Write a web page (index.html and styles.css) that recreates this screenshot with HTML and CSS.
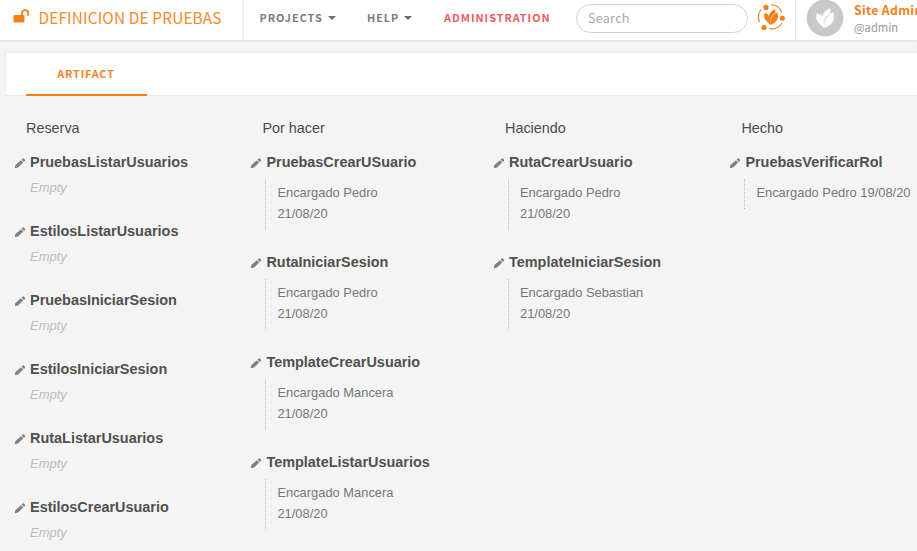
FILE: index.html
```html
<!DOCTYPE html>
<html lang="es">
<head>
<meta charset="utf-8">
<title>Definicion de pruebas</title>
<link rel="stylesheet" href="styles.css">
</head>
<body>
<svg class="defs" width="0" height="0" aria-hidden="true">
  <symbol id="pencil" viewBox="0 0 12 12">
    <path fill="#808080" d="M.8 11.2 1.4 8 7 3.2 9.2 5.6 4 10.6Z"/>
    <path fill="#808080" d="M7.6 2.6 8.8 1.6Q9.5 1 10.2 1.7L11 2.7Q11.5 3.3 10.9 3.9L9.8 5Z"/>
  </symbol>
  <symbol id="tulip" viewBox="0 0 24 24">
    <path d="M10.5 23C9 19 2 17 2.500 10Q2.500 8 3.500 7C8 8 10.500 11 10.500 17Q11.500 20 10.500 23Z"/>
    <path d="M11 16C7 10 11 4 17.500 1.500C18 4 18 5 17.500 7C14 9 12 11 11 16Z"/>
    <path d="M11.500 22.500C11 14 14.500 9 21 6C23 14 20 20 11.500 22.500Z"/>
  </symbol>
</svg>
<header class="topbar">
  <a class="project">
    <svg class="lock" width="17" height="14" viewBox="0 0 17 14"><rect x=".5" y="6" width="11" height="7.500" rx="1" fill="#f57f17"/><path d="M9 6.500V4.200a3.100 3.100 0 0 1 6.200 0V6" fill="none" stroke="#f57f17" stroke-width="1.800" stroke-linecap="round"/></svg>
    <span class="project-name">DEFINICION DE PRUEBAS</span>
  </a>
  <nav class="menu">
    <a class="projects">PROJECTS<i class="caret"></i></a>
    <a class="help">HELP<i class="caret"></i></a>
    <a class="administration">ADMINISTRATION</a>
  </nav>
  <div class="search">Search</div>
  <svg class="logo" width="28" height="28" viewBox="0 0 28 28">
    <g fill="none" stroke="#f57f17" stroke-width="1.1"><path d="M14 1.8A12.2 12.2 0 0 1 25 9.5M25 20A12.2 12.2 0 0 1 12.5 25.6M2.5 19.2A12.2 12.2 0 0 1 4 6.5"/></g>
    <g fill="#f57f17"><circle cx="9" cy="4.4" r="2.6"/><circle cx="25.4" cy="15.3" r="2.5"/><circle cx="7" cy="24.6" r="2.6"/></g>
    <use href="#tulip" x="5.500" y="5.500" width="17" height="17" fill="#f57f17" stroke="#f57f17" stroke-width=".6"/>
  </svg>
  <div class="user">
    <svg class="avatar" width="38" height="38" viewBox="0 0 38 38"><circle cx="19" cy="19" r="18.4" fill="#c9c9c9"/><circle cx="19" cy="19" r="16.5" fill="none" stroke="#c1c1c1" stroke-width=".7"/><use href="#tulip" x="8" y="8" width="22" height="22" fill="#fff" stroke="#fff" stroke-width=".4"/></svg>
    <div class="user-text"><b>Site Admin</b><span>@admin</span></div>
  </div>
</header>
<div class="tabs"><a class="tab">ARTIFACT</a></div>
<main class="board">
  <section class="column">
    <h2>Reserva</h2>
    <article><h3><svg class="pencil"><use href="#pencil"/></svg>PruebasListarUsuarios</h3><p class="empty">Empty</p></article>
    <article><h3><svg class="pencil"><use href="#pencil"/></svg>EstilosListarUsuarios</h3><p class="empty">Empty</p></article>
    <article><h3><svg class="pencil"><use href="#pencil"/></svg>PruebasIniciarSesion</h3><p class="empty">Empty</p></article>
    <article><h3><svg class="pencil"><use href="#pencil"/></svg>EstilosIniciarSesion</h3><p class="empty">Empty</p></article>
    <article><h3><svg class="pencil"><use href="#pencil"/></svg>RutaListarUsuarios</h3><p class="empty">Empty</p></article>
    <article><h3><svg class="pencil"><use href="#pencil"/></svg>EstilosCrearUsuario</h3><p class="empty">Empty</p></article>
  </section>
  <section class="column">
    <h2>Por hacer</h2>
    <article><h3><svg class="pencil"><use href="#pencil"/></svg>PruebasCrearUSuario</h3><p class="note">Encargado Pedro<br>21/08/20</p></article>
    <article><h3><svg class="pencil"><use href="#pencil"/></svg>RutaIniciarSesion</h3><p class="note">Encargado Pedro<br>21/08/20</p></article>
    <article><h3><svg class="pencil"><use href="#pencil"/></svg>TemplateCrearUsuario</h3><p class="note">Encargado Mancera<br>21/08/20</p></article>
    <article><h3><svg class="pencil"><use href="#pencil"/></svg>TemplateListarUsuarios</h3><p class="note">Encargado Mancera<br>21/08/20</p></article>
  </section>
  <section class="column">
    <h2>Haciendo</h2>
    <article><h3><svg class="pencil"><use href="#pencil"/></svg>RutaCrearUsuario</h3><p class="note">Encargado Pedro<br>21/08/20</p></article>
    <article><h3><svg class="pencil"><use href="#pencil"/></svg>TemplateIniciarSesion</h3><p class="note">Encargado Sebastian<br>21/08/20</p></article>
  </section>
  <section class="column">
    <h2>Hecho</h2>
    <article><h3><svg class="pencil"><use href="#pencil"/></svg>PruebasVerificarRol</h3><p class="note">Encargado Pedro 19/08/20</p></article>
  </section>
</main>
</body>
</html>
```
FILE: styles.css
```css
* { box-sizing: border-box; }
body {
  margin: 0;
  height: 551px;
  overflow: hidden;
  background: #f4f4f4;
  font-family: "Liberation Sans", sans-serif;
}
.defs { display: none; }
h2, h3, p { margin: 0; }

.topbar {
  display: flex;
  height: 40px;
  background: #fff;
  box-shadow: 0 1px 2px #dddddf;
  font-family: "Noto Sans CJK SC", sans-serif;
  white-space: nowrap;
}
.project {
  display: flex;
  flex: none;
  width: 244px;
  padding: 0 0 0 13px;
  border-right: 2px solid #f0f0f5;
  color: #f68a2a;
}
.lock { margin: 9px 8.5px 0 0; flex: none; }
.project-name { font-size: 15.4px; line-height: 34px; letter-spacing: .15px; }
.menu {
  display: flex;
  flex: none;
  width: 332px;
  padding-left: 15.5px;
  font-size: 10.8px;
  font-weight: 700;
  line-height: 35px;
  letter-spacing: 1.02px;
  color: #7b7b7b;
}
.projects { width: 107.5px; }
.help { width: 77px; }
.administration { color: #ec5b62; }
.caret {
  display: inline-block;
  margin-left: 5px;
  border: 4px solid transparent;
  border-top-color: #6e6e6e;
  border-bottom: 0;
  vertical-align: 2px;
}
.search {
  flex: none;
  width: 172px;
  height: 29px;
  margin-top: 3.5px;
  padding-left: 11px;
  border: 1.5px solid #d2d2d2;
  border-radius: 15px;
  font-size: 12.5px;
  line-height: 26px;
  letter-spacing: .3px;
  color: #a8a8a8;
}
.logo { flex: none; margin: 3px 10px 0 9px; }
.user {
  display: flex;
  flex: none;
  border-left: 1px solid #e4e4ee;
  padding-left: 10px;
}
.avatar { flex: none; margin-top: -1px; }
.user-text { display: flex; flex-direction: column; margin-left: 10px; padding-top: 1px; }
.user-text b { font-size: 12.3px; line-height: 18px; letter-spacing: .3px; color: #f58220; }
.user-text span { font-size: 11.2px; line-height: 16px; color: #999; }

.tabs {
  display: flex;
  height: 43px;
  margin: 13px 0 0 5px;
  padding-left: 20px;
  background: #fff;
  border: solid #e8e8ed;
  border-width: 0 0 1px 1px;
  box-shadow: 0 -1px 1px #eee;
}
.tab {
  width: 121px;
  height: 43px;
  padding-right: 1px;
  border-bottom: 2px solid #f57f17;
  font: 700 10.8px/41px "Noto Sans CJK SC", sans-serif;
  letter-spacing: .85px;
  text-align: center;
  color: #f58220;
}

.board {
  display: grid;
  grid-template-columns: 236.4px 242.6px 236.4px 188px;
  padding-left: 14px;
}
h2 {
  margin: 22px 0 14px 12px;
  font-size: 14.4px;
  font-weight: 400;
  line-height: 20px;
  color: #4a4a4a;
}
h3 {
  display: flex;
  align-items: center;
  font-size: 14.45px;
  line-height: 20px;
  color: #505050;
}
.pencil { width: 12px; height: 12px; margin: 2px 4px 0 0; flex: none; }
.empty {
  margin: 6px 0 23px 16px;
  font-size: 13px;
  font-style: italic;
  line-height: 20px;
  color: #bdbdbd;
}
.note {
  margin: 7px 0 22px 15px;
  padding: 3px 0 6px 11px;
  border-left: 1px dotted #bbb;
  font-size: 12.9px;
  line-height: 21px;
  color: #777;
  white-space: nowrap;
}
```
